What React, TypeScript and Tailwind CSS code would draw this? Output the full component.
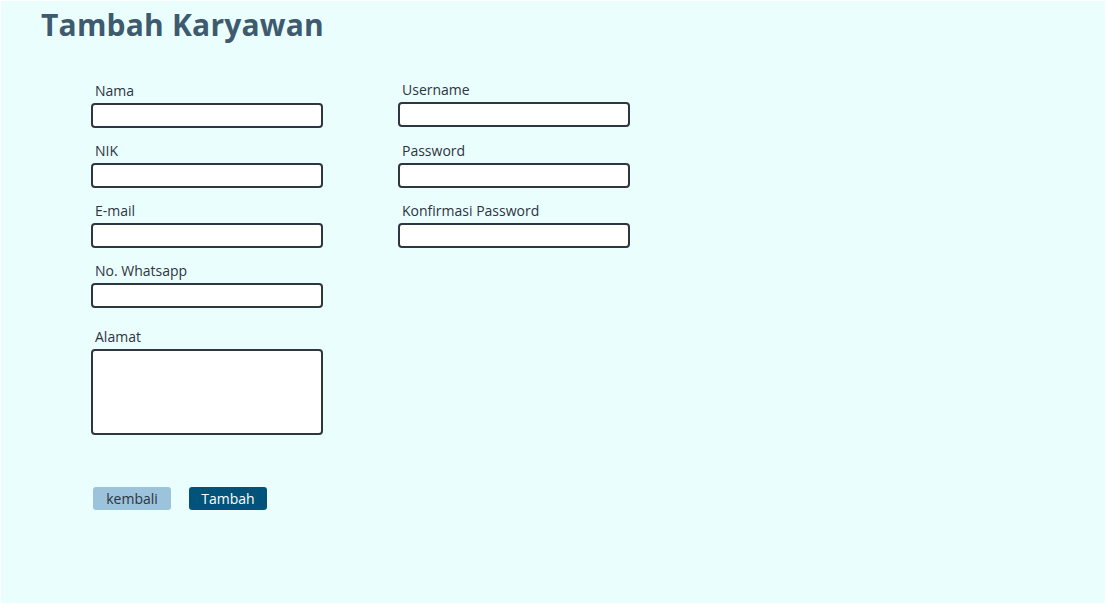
import React from "react";

function Field({ label, area = false, className = "" }: { label: string; area?: boolean; className?: string }) {
  return (
    <div className={"flex flex-col " + className}>
      <label className="pl-1 pt-px mb-[3px] text-[14px] leading-[19px] text-[#2d3440]">{label}</label>
      {area ? (
        <textarea className="w-[232px] h-[86px] bg-white border-2 border-[#2f3642] rounded-[4px] resize-none outline-none" />
      ) : (
        <input className="w-[232px] h-[25px] bg-white border-2 border-[#2f3642] rounded-[4px] outline-none" />
      )}
    </div>
  );
}

export default function App() {
  return (
    <div className="bg-white p-px w-[1106px] h-[604px]" style={{ fontFamily: "'Open Sans', 'Liberation Sans', sans-serif" }}>
      <div className="bg-[#ebfefe] h-full pl-[40px] pt-[4px]">
        <h1 className="text-[30px] leading-[40px] font-bold text-[#3e5a6e] tracking-[0.2px]">Tambah Karyawan</h1>
        <div className="flex gap-[75px] pl-[50px] pt-[35px]">
          <div className="flex flex-col">
            <div className="flex flex-col gap-[12px]">
              <Field label="Nama" />
              <Field label="NIK" />
              <Field label="E-mail" />
              <Field label="No. Whatsapp" />
            </div>
            <div className="mt-[18px]">
              <Field label="Alamat" area />
            </div>
            <div className="flex gap-[18px] mt-[52px] pl-[2px]">
              <button className="w-[78px] h-[23px] rounded-[3px] bg-[#9bc3dc] text-[14px] text-[#2d3440]">kembali</button>
              <button className="w-[78px] h-[23px] rounded-[3px] bg-[#02537a] text-[14px] text-white">Tambah</button>
            </div>
          </div>
          <div className="flex flex-col gap-[12px] -mt-px">
            <Field label="Username" className="mb-px" />
            <Field label="Password" />
            <Field label="Konfirmasi Password" />
          </div>
        </div>
      </div>
    </div>
  );
}
